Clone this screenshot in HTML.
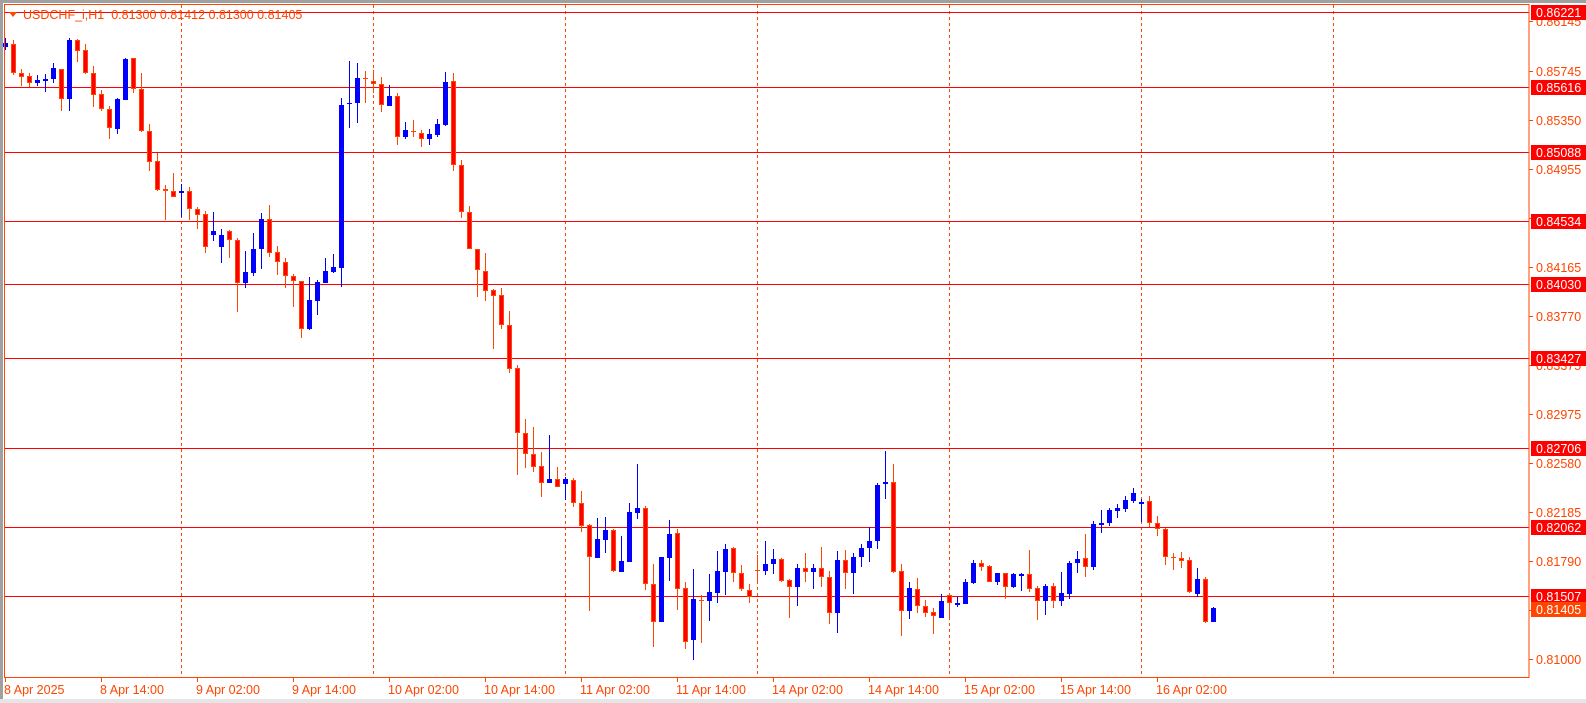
<!DOCTYPE html>
<html><head><meta charset="utf-8">
<style>
html,body{margin:0;padding:0;background:#fff;width:1586px;height:703px;overflow:hidden}
svg{display:block}
text{font-family:"Liberation Sans",sans-serif;font-size:12.5px}
</style></head>
<body>
<svg id="c" width="1586" height="703" xmlns="http://www.w3.org/2000/svg">
<rect x="0" y="0" width="1586" height="703" fill="#fff"/>
<rect x="0" y="0" width="1586" height="3" fill="#a0a0a0"/>
<rect x="0" y="0" width="3" height="703" fill="#a0a0a0"/>
<rect x="0" y="699" width="1586" height="4" fill="#e6e6e6"/>
<g id="grid"></g>
<g id="hl"></g>
<g id="cd"></g>
<rect x="4.5" y="4.5" width="1524.5" height="673" fill="none" stroke="#ff4500" stroke-width="1"/>
<g id="ax"></g>
<text x="23" y="19" fill="#ff4500" style="white-space:pre">USDCHF_i,H1&#160;&#160;0.81300 0.81412 0.81300 0.81405</text>
<path d="M9 12 L17 12 L13 17 Z" fill="#ff4500"/>
</svg>
<script>
var NS="http://www.w3.org/2000/svg";
function el(p,t,a,txt){var e=document.createElementNS(NS,t);for(var k in a)e.setAttribute(k,a[k]);if(txt!==undefined)e.textContent=txt;p.appendChild(e);return e;}
var grid=document.getElementById('grid'),hl=document.getElementById('hl'),cd=document.getElementById('cd'),ax=document.getElementById('ax');
[181,373,565,757,949,1141,1333].forEach(function(x){el(grid,'line',{x1:x+.5,y1:5,x2:x+.5,y2:677,stroke:'#ff4500','stroke-dasharray':'3,3','stroke-width':1});});
function Y(p){return 12+(0.86221-p)*12392;}
var lines=[0.86221,0.85616,0.85088,0.84534,0.84030,0.83427,0.82706,0.82062,0.81507];
lines.forEach(function(p){var y=Math.round(Y(p))+.5;el(hl,'line',{x1:5,y1:y,x2:1529,y2:y,stroke:'#ff0000','stroke-width':1});});
var D="b 38 43 47 50|r 40 44 73 75|r 69 73 77 86|r 73 76 83 87|b 75 80 83 86|b 74 79 81 92|b 63 68 79 83|r 69 69 99 111|b 38 40 99 111|r 39 40 51 62|r 44 50 73 74|r 66 73 95 107|r 90 94 109 111|r 106 109 128 139|b 98 99 129 134|b 58 59 100 100|r 58 58 89 93|r 73 89 131 132|r 124 131 162 171|r 153 161 190 191|r 185 189 191 220|r 173 191 197 197|b 184 191 193 217|r 187 191 209 220|r 207 209 215 229|r 211 214 247 253|b 212 231 235 241|b 229 235 247 263|r 230 231 240 258|r 238 240 283 312|b 251 272 283 288|b 233 249 273 276|b 213 219 249 269|r 205 219 253 257|r 246 252 262 275|r 258 262 276 288|r 274 276 281 307|r 281 281 329 338|b 277 300 329 330|b 280 282 301 315|b 258 271 283 283|b 254 267 272 273|b 98 105 268 287|b 61 103 104 128|b 63 78 103 123|r 71 78 79 103|r 70 81 84 93|r 77 84 105 112|b 85 96 106 106|r 93 96 137 145|b 122 130 137 139|r 120 131 132 137|r 130 133 139 147|b 129 134 139 145|b 119 124 135 137|b 72 82 125 126|r 73 81 165 171|r 160 165 212 218|r 206 212 249 249|r 249 249 270 297|r 253 271 291 301|r 289 290 296 349|r 288 295 325 329|r 311 325 369 373|r 365 368 433 475|r 419 433 454 468|r 427 454 467 472|r 452 466 483 497|b 435 479 483 483|r 467 479 487 487|b 477 479 484 500|r 478 480 503 507|r 491 503 526 532|r 524 525 557 611|b 518 539 558 558|b 517 530 540 553|r 529 530 571 572|b 536 561 572 572|b 503 512 562 562|b 464 508 513 519|r 506 508 584 590|r 564 584 622 647|b 557 557 622 622|b 520 534 558 581|r 529 533 589 610|r 582 588 642 649|b 569 599 640 660|r 595 600 601 643|b 574 592 601 621|b 551 571 593 603|b 544 549 572 595|r 547 548 573 582|r 565 573 589 591|r 584 590 597 603|r 555 570 571 584|b 541 564 571 575|b 549 559 564 574|r 558 559 581 582|r 579 580 587 618|b 564 568 587 606|r 553 568 572 582|b 564 568 572 589|r 547 568 577 587|r 571 577 613 624|b 551 560 613 633|r 550 560 573 589|b 553 557 573 594|b 544 548 557 567|b 527 541 548 562|b 483 485 541 549|b 451 482 484 499|r 464 482 572 573|r 564 571 611 636|b 582 588 611 619|r 578 589 606 613|r 600 606 613 617|r 608 612 616 634|b 594 601 618 618|r 594 595 603 619|b 597 603 605 607|b 579 582 604 604|b 560 563 583 584|r 560 563 567 571|r 565 566 582 582|b 573 573 582 585|r 573 573 587 599|b 573 574 587 588|b 573 574 576 591|r 550 574 589 592|r 586 588 601 620|b 584 586 601 615|r 583 586 601 608|b 572 593 601 606|b 561 563 594 599|b 551 559 563 573|r 534 558 567 577|b 521 524 567 570|b 510 523 525 533|b 508 510 523 526|b 504 508 511 518|b 496 500 509 512|b 488 493 501 503|b 499 502 504 522|r 496 501 523 527|r 516 523 529 536|r 528 529 557 565|r 553 557 558 570|r 552 558 561 568|r 557 560 592 593|b 568 579 594 597|r 577 579 622 623|b 607 608 622 622";
D.split('|').forEach(function(s,i){var a=s.split(' ');var c=a[0],wt=+a[1],bt=+a[2],bb=+a[3],wb=+a[4];var cx=5+8*i;
 var wc=c=='r'?'#ff4500':'#0000ff';
 el(cd,'rect',{x:cx,y:wt,width:1,height:Math.max(1,wb-wt),fill:wc});
 var h=bb-bt;
 if(h<2){el(cd,'rect',{x:cx-2,y:bt,width:5,height:1,fill:wc});}
 else if(c=='r'){el(cd,'rect',{x:cx-1.5,y:bt+.5,width:4,height:h-1,fill:'#ff0000',stroke:'#ff4500','stroke-width':1});}
 else{el(cd,'rect',{x:cx-2,y:bt,width:5,height:h,fill:'#0000ff'});}
});
var ticks=[[0.86145,'0.86145'],[0.85745,'0.85745'],[0.85350,'0.85350'],[0.84955,'0.84955'],[0.84560,'0.84560'],[0.84165,'0.84165'],[0.83770,'0.83770'],[0.83375,'0.83375'],[0.82975,'0.82975'],[0.82580,'0.82580'],[0.82185,'0.82185'],[0.81790,'0.81790'],[0.81395,'0.81395'],[0.81000,'0.81000']];
ticks.forEach(function(t){var y=Math.round(Y(t[0]));el(ax,'rect',{x:1529,y:y,width:4,height:1,fill:'#ff4500'});el(ax,'text',{x:1536,y:y+5,fill:'#ff4500'},t[1]);});
lines.forEach(function(p){var y=Math.round(Y(p));el(ax,'rect',{x:1531,y:y-7,width:55,height:15,fill:'#ff0000'});el(ax,'text',{x:1536,y:y+5,fill:'#fff'},p.toFixed(5));});
var y=Math.round(Y(0.81405));el(ax,'rect',{x:1531,y:y-7,width:55,height:15,fill:'#ff4500'});el(ax,'text',{x:1536,y:y+5,fill:'#fff'},'0.81405');
var tl=["8 Apr 2025","8 Apr 14:00","9 Apr 02:00","9 Apr 14:00","10 Apr 02:00","10 Apr 14:00","11 Apr 02:00","11 Apr 14:00","14 Apr 02:00","14 Apr 14:00","15 Apr 02:00","15 Apr 14:00","16 Apr 02:00"];
tl.forEach(function(t,i){var x=5+96*i;el(ax,'rect',{x:x,y:678,width:1,height:4,fill:'#ff4500'});el(ax,'text',{x:x-1,y:694,fill:'#ff4500'},t);});
</script>
</body></html>
